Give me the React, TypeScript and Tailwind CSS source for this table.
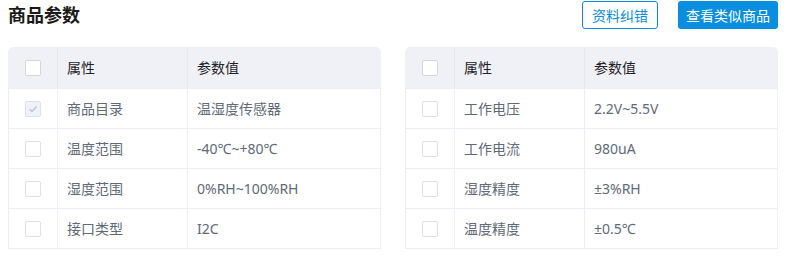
import React from "react"

type Row = { attr: string; value: string; checked?: boolean }

const leftRows: Row[] = [
  { attr: "商品目录", value: "温湿度传感器", checked: true },
  { attr: "温度范围", value: "-40℃~+80℃" },
  { attr: "湿度范围", value: "0%RH~100%RH" },
  { attr: "接口类型", value: "I2C" },
]

const rightRows: Row[] = [
  { attr: "工作电压", value: "2.2V~5.5V" },
  { attr: "工作电流", value: "980uA" },
  { attr: "湿度精度", value: "±3%RH" },
  { attr: "温度精度", value: "±0.5℃" },
]

function Checkbox({ checked, header }: { checked?: boolean; header?: boolean }) {
  if (checked) {
    return (
      <span className="flex h-4 w-4 items-center justify-center rounded-[2px] border border-[#dcdfe6] bg-[#edf2fc]">
        <svg width="10" height="8" viewBox="0 0 10 8" fill="none">
          <path d="M1.5 4l2.5 2.5L8.5 1.5" stroke="#c0c4cc" strokeWidth="1.4" />
        </svg>
      </span>
    )
  }
  return <span className={`block h-4 w-4 rounded-[2px] border ${header ? "border-[#d4d7de]" : "border-[#dcdfe6]"} bg-white`} />
}

function ParamTable({ rows }: { rows: Row[] }) {
  return (
    <div className="w-[373px] overflow-hidden rounded-t-[5px] border-b border-[#ebeef5]">
      <div className="flex h-[41px] bg-[#f0f1f6] text-[14px] text-[#1f2329]">
        <div className="flex w-[50px] items-center justify-center border-r border-[#e6e8ee]">
          <Checkbox header />
        </div>
        <div className="flex w-[130px] items-center border-r border-[#e6e8ee] pl-[9px]">属性</div>
        <div className="flex flex-1 items-center pl-[9px]">参数值</div>
      </div>
      {rows.map((r) => (
        <div
          key={r.attr}
          className="flex h-[40px] border-l border-r border-t border-[#ebeef5] text-[14px] text-[#606a78]"
        >
          <div className="flex w-[49px] items-center justify-center border-r border-[#ebeef5]">
            <Checkbox checked={r.checked} />
          </div>
          <div className="flex w-[130px] items-center border-r border-[#ebeef5] pl-[9px]">{r.attr}</div>
          <div className="flex flex-1 items-center pl-[9px]">{r.value}</div>
        </div>
      ))}
    </div>
  )
}

export default function App() {
  return (
    <div className="h-[273px] w-[789px] bg-white font-['Noto_Sans','Noto_Sans_CJK_SC',sans-serif]">
      <div className="ml-2 flex w-[770px] flex-col">
        {/* 标题 + 按钮 */}
        <div className="flex h-[29px] items-start justify-between pt-[1px]">
          <h2 className="mt-[3px] text-[18px] font-bold leading-[22px] text-[#1a1a1a]">商品参数</h2>
          <div className="flex gap-5">
            <button className="h-[28px] w-[76px] rounded-[3px] border border-[#0a8ee0] bg-white text-[14px] text-[#0a8ee0]">
              资料纠错
            </button>
            <button className="h-[28px] w-[100px] rounded-[3px] bg-[#0a8ee0] text-[14px] text-white">
              查看类似商品
            </button>
          </div>
        </div>

        <div className="mt-[18px] flex gap-6">
          <ParamTable rows={leftRows} />
          <ParamTable rows={rightRows} />
        </div>
      </div>
    </div>
  )
}
